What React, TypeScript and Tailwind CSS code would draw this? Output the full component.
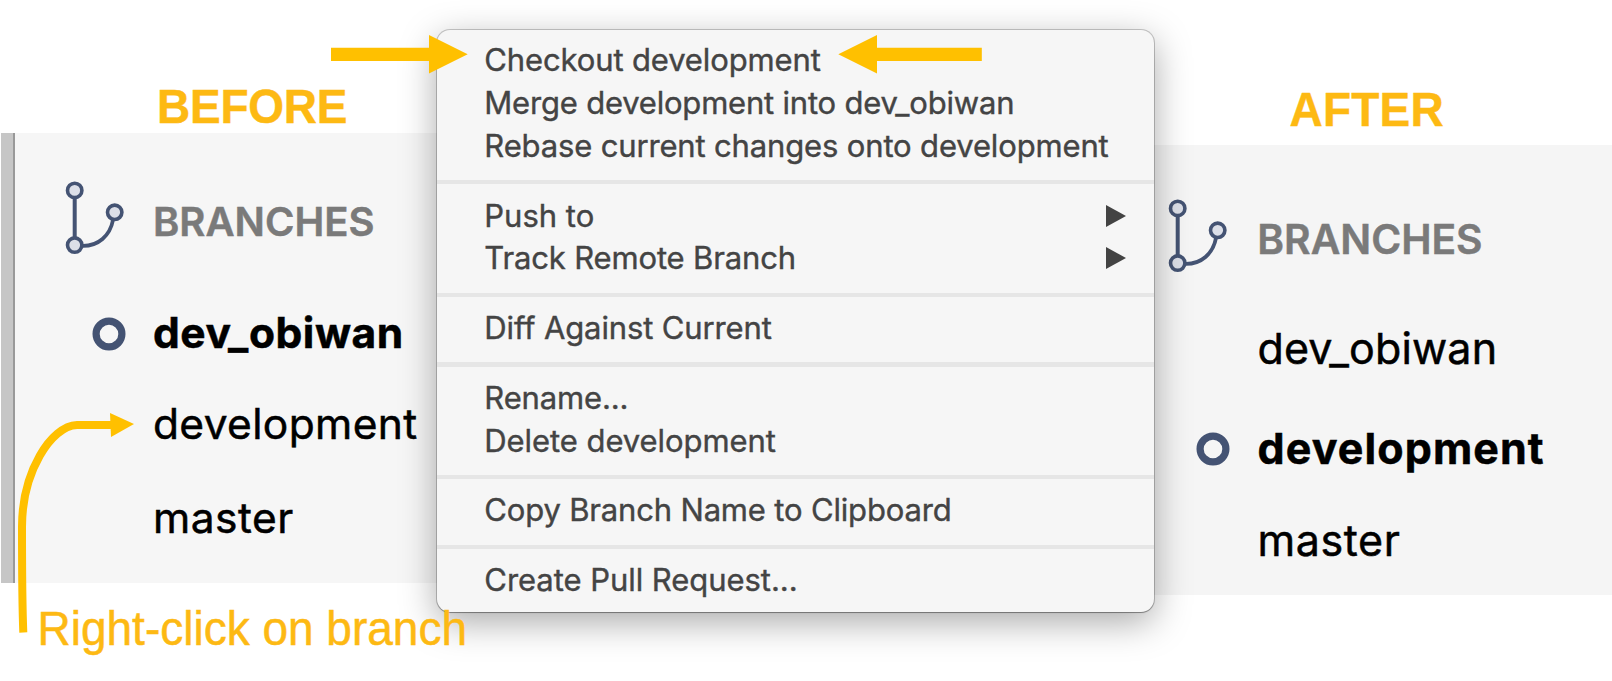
import React from "react";

type MenuEntry = { label: string; tracking: string; submenu?: boolean };

const menuGroups: MenuEntry[][] = [
  [
    { label: "Checkout development", tracking: "tracking-[-0.13px]" },
    { label: "Merge development into dev_obiwan", tracking: "tracking-[-0.2px]" },
    { label: "Rebase current changes onto development", tracking: "tracking-[-0.15px]" },
  ],
  [
    { label: "Push to", tracking: "tracking-normal", submenu: true },
    { label: "Track Remote Branch", tracking: "tracking-[-0.15px]", submenu: true },
  ],
  [{ label: "Diff Against Current", tracking: "tracking-[-0.13px]" }],
  [
    { label: "Rename...", tracking: "tracking-[-0.15px]" },
    { label: "Delete development", tracking: "tracking-[-0.07px]" },
  ],
  [{ label: "Copy Branch Name to Clipboard", tracking: "tracking-[-0.17px]" }],
  [{ label: "Create Pull Request...", tracking: "tracking-[-0.05px]" }],
];

function BranchIcon() {
  return (
    <svg width="54" height="60" viewBox="0 0 54 60" className="shrink-0 overflow-visible" fill="none" stroke="#445373">
      <path d="M7.7 7V47" strokeWidth="4" />
      <path d="M16 54.9C31 54.9 43 45 46 29" strokeWidth="3.8" />
      <g fill="#dcdfe8" strokeWidth="3.6">
        <circle cx="7.7" cy="-0.6" r="7.2" />
        <circle cx="7.7" cy="54.1" r="7.2" />
        <circle cx="47.7" cy="21.3" r="7.2" />
      </g>
    </svg>
  );
}

function CurrentMarker() {
  return (
    <svg width="34" height="34" viewBox="0 0 34 34" className="shrink-0" fill="none">
      <circle cx="17" cy="17" r="12.9" stroke="#445373" strokeWidth="7.2" />
    </svg>
  );
}

function BranchRow({
  name,
  current,
  indent,
  className,
}: {
  name: string;
  current?: boolean;
  indent: string;
  className: string;
}) {
  return (
    <div className={`flex h-[60px] items-center leading-[60px] text-black ${className}`}>
      <div className={`flex shrink-0 justify-end pt-[2px] pr-[27.5px] ${indent}`}>{current && <CurrentMarker />}</div>
      <span className={current ? "font-bold [-webkit-text-stroke:0.5px_black]" : "[-webkit-text-stroke:0.5px_black]"}>
        {name}
      </span>
    </div>
  );
}

function Menu() {
  return (
    <div className="z-10 h-[582px] w-[717px] shrink-0 rounded-[13px] bg-[#f6f6f6] pt-[9px] text-[31px] text-[#444444] shadow-[0_0_0_1px_rgba(0,0,0,0.2),0_1px_1px_rgba(0,0,0,0.25),0_10px_36px_rgba(0,0,0,0.34)]">
      {menuGroups.map((group, i) => (
        <div key={i}>
          {i > 0 && <div className="mt-[12.75px] mb-[10px] h-[4.25px] bg-[#e6e6e6]" />}
          {group.map((item) => (
            <div
              key={item.label}
              className="flex h-[42.75px] items-center justify-between pr-[28px] pl-[47.3px] leading-[42.75px] whitespace-nowrap"
            >
              <span className={`pt-[0.6px] [-webkit-text-stroke:0.4px_#444444] ${item.tracking}`}>{item.label}</span>
              {item.submenu && (
                <svg width="20" height="22" viewBox="0 0 20 22" fill="#434343">
                  <path d="M0 0L20 11L0 22Z" />
                </svg>
              )}
            </div>
          ))}
        </div>
      ))}
    </div>
  );
}

export default function App() {
  return (
    <div className="relative flex h-[681px] w-[1612px] overflow-hidden bg-white font-['Inter',sans-serif] whitespace-nowrap">
      <section className="flex w-[437px] shrink-0 flex-col">
        <h2 className="h-[133px] pt-[79px] pl-[157px] font-['Liberation_Sans',sans-serif] text-[46px] leading-[54px] font-bold tracking-[-0.25px] text-[#fdb913]">
          <span className="inline-block scale-y-105 [-webkit-text-stroke:0.4px_#fdb913]">BEFORE</span>
        </h2>
        <div className="ml-px flex h-[450px] bg-[#f6f6f6]">
          <div className="w-[14px] shrink-0 border-r-2 border-[#999999] bg-[#c6c6c6]" />
          <div className="flex flex-col pt-[58px] text-[42.5px]">
            <div className="flex h-[60px] items-center pl-[52px] text-[40px] leading-[60px] font-semibold text-[#7a7a7a]">
              <BranchIcon />
              <span className="ml-[32px] pt-[2px] [-webkit-text-stroke:0.5px_#7a7a7a]">BRANCHES</span>
            </div>
            <BranchRow name="dev_obiwan" current indent="w-[138px]" className="mt-[52px] tracking-[0.55px]" />
            <BranchRow name="development" indent="w-[138px]" className="mt-[31px] tracking-[0.35px]" />
            <BranchRow name="master" indent="w-[138px]" className="mt-[34px] tracking-[0.5px]" />
          </div>
        </div>
        <p className="relative z-20 mt-[18px] pl-[37.5px] font-['Liberation_Sans',sans-serif] text-[46px] leading-[54px] text-[#fdb913]">
          <span className="inline-block scale-y-105 [-webkit-text-stroke:0.5px_#fdb913]">Right-click on branch</span>
        </p>
      </section>

      <div className="z-10 pt-[30px]">
        <Menu />
      </div>

      <section className="flex flex-1 flex-col">
        <h2 className="h-[145px] pt-[82px] pl-[135.5px] font-['Liberation_Sans',sans-serif] text-[46px] leading-[54px] font-bold tracking-[0.2px] text-[#fdb913]">
          <span className="inline-block scale-y-105 [-webkit-text-stroke:0.4px_#fdb913]">AFTER</span>
        </h2>
        <div className="flex h-[450px] flex-col bg-[#f5f5f5] pt-[64px] text-[43px]">
          <div className="flex h-[60px] items-center pl-[16.3px] text-[40.7px] leading-[60px] font-semibold text-[#7a7a7a]">
            <BranchIcon />
            <span className="ml-[33px] pt-[2px] [-webkit-text-stroke:0.5px_#7a7a7a]">BRANCHES</span>
          </div>
          <BranchRow name="dev_obiwan" indent="w-[103.5px]" className="mt-[49px] tracking-[0.15px]" />
          <BranchRow name="development" current indent="w-[103.5px]" className="mt-[40px] tracking-[1.1px]" />
          <BranchRow name="master" indent="w-[103.5px]" className="mt-[32px] tracking-[0.6px]" />
        </div>
      </section>

      <svg
        className="pointer-events-none absolute top-0 left-0 z-30"
        width="1612"
        height="681"
        viewBox="0 0 1612 681"
        fill="#ffc000"
      >
        <path d="M331 47.8H429V35L467.7 54.3L429 73.5V61H331Z" />
        <path d="M981.8 47.8H877V35L838.3 54.3L877 73.5V61H981.8Z" />
        <path
          d="M23.3 632.5C22.2 605 22 570 22 527C22 472 51 426 77 425H112"
          fill="none"
          stroke="#ffc000"
          strokeWidth="8"
        />
        <path d="M110 413L134 424L111 437Z" />
      </svg>
    </div>
  );
}
